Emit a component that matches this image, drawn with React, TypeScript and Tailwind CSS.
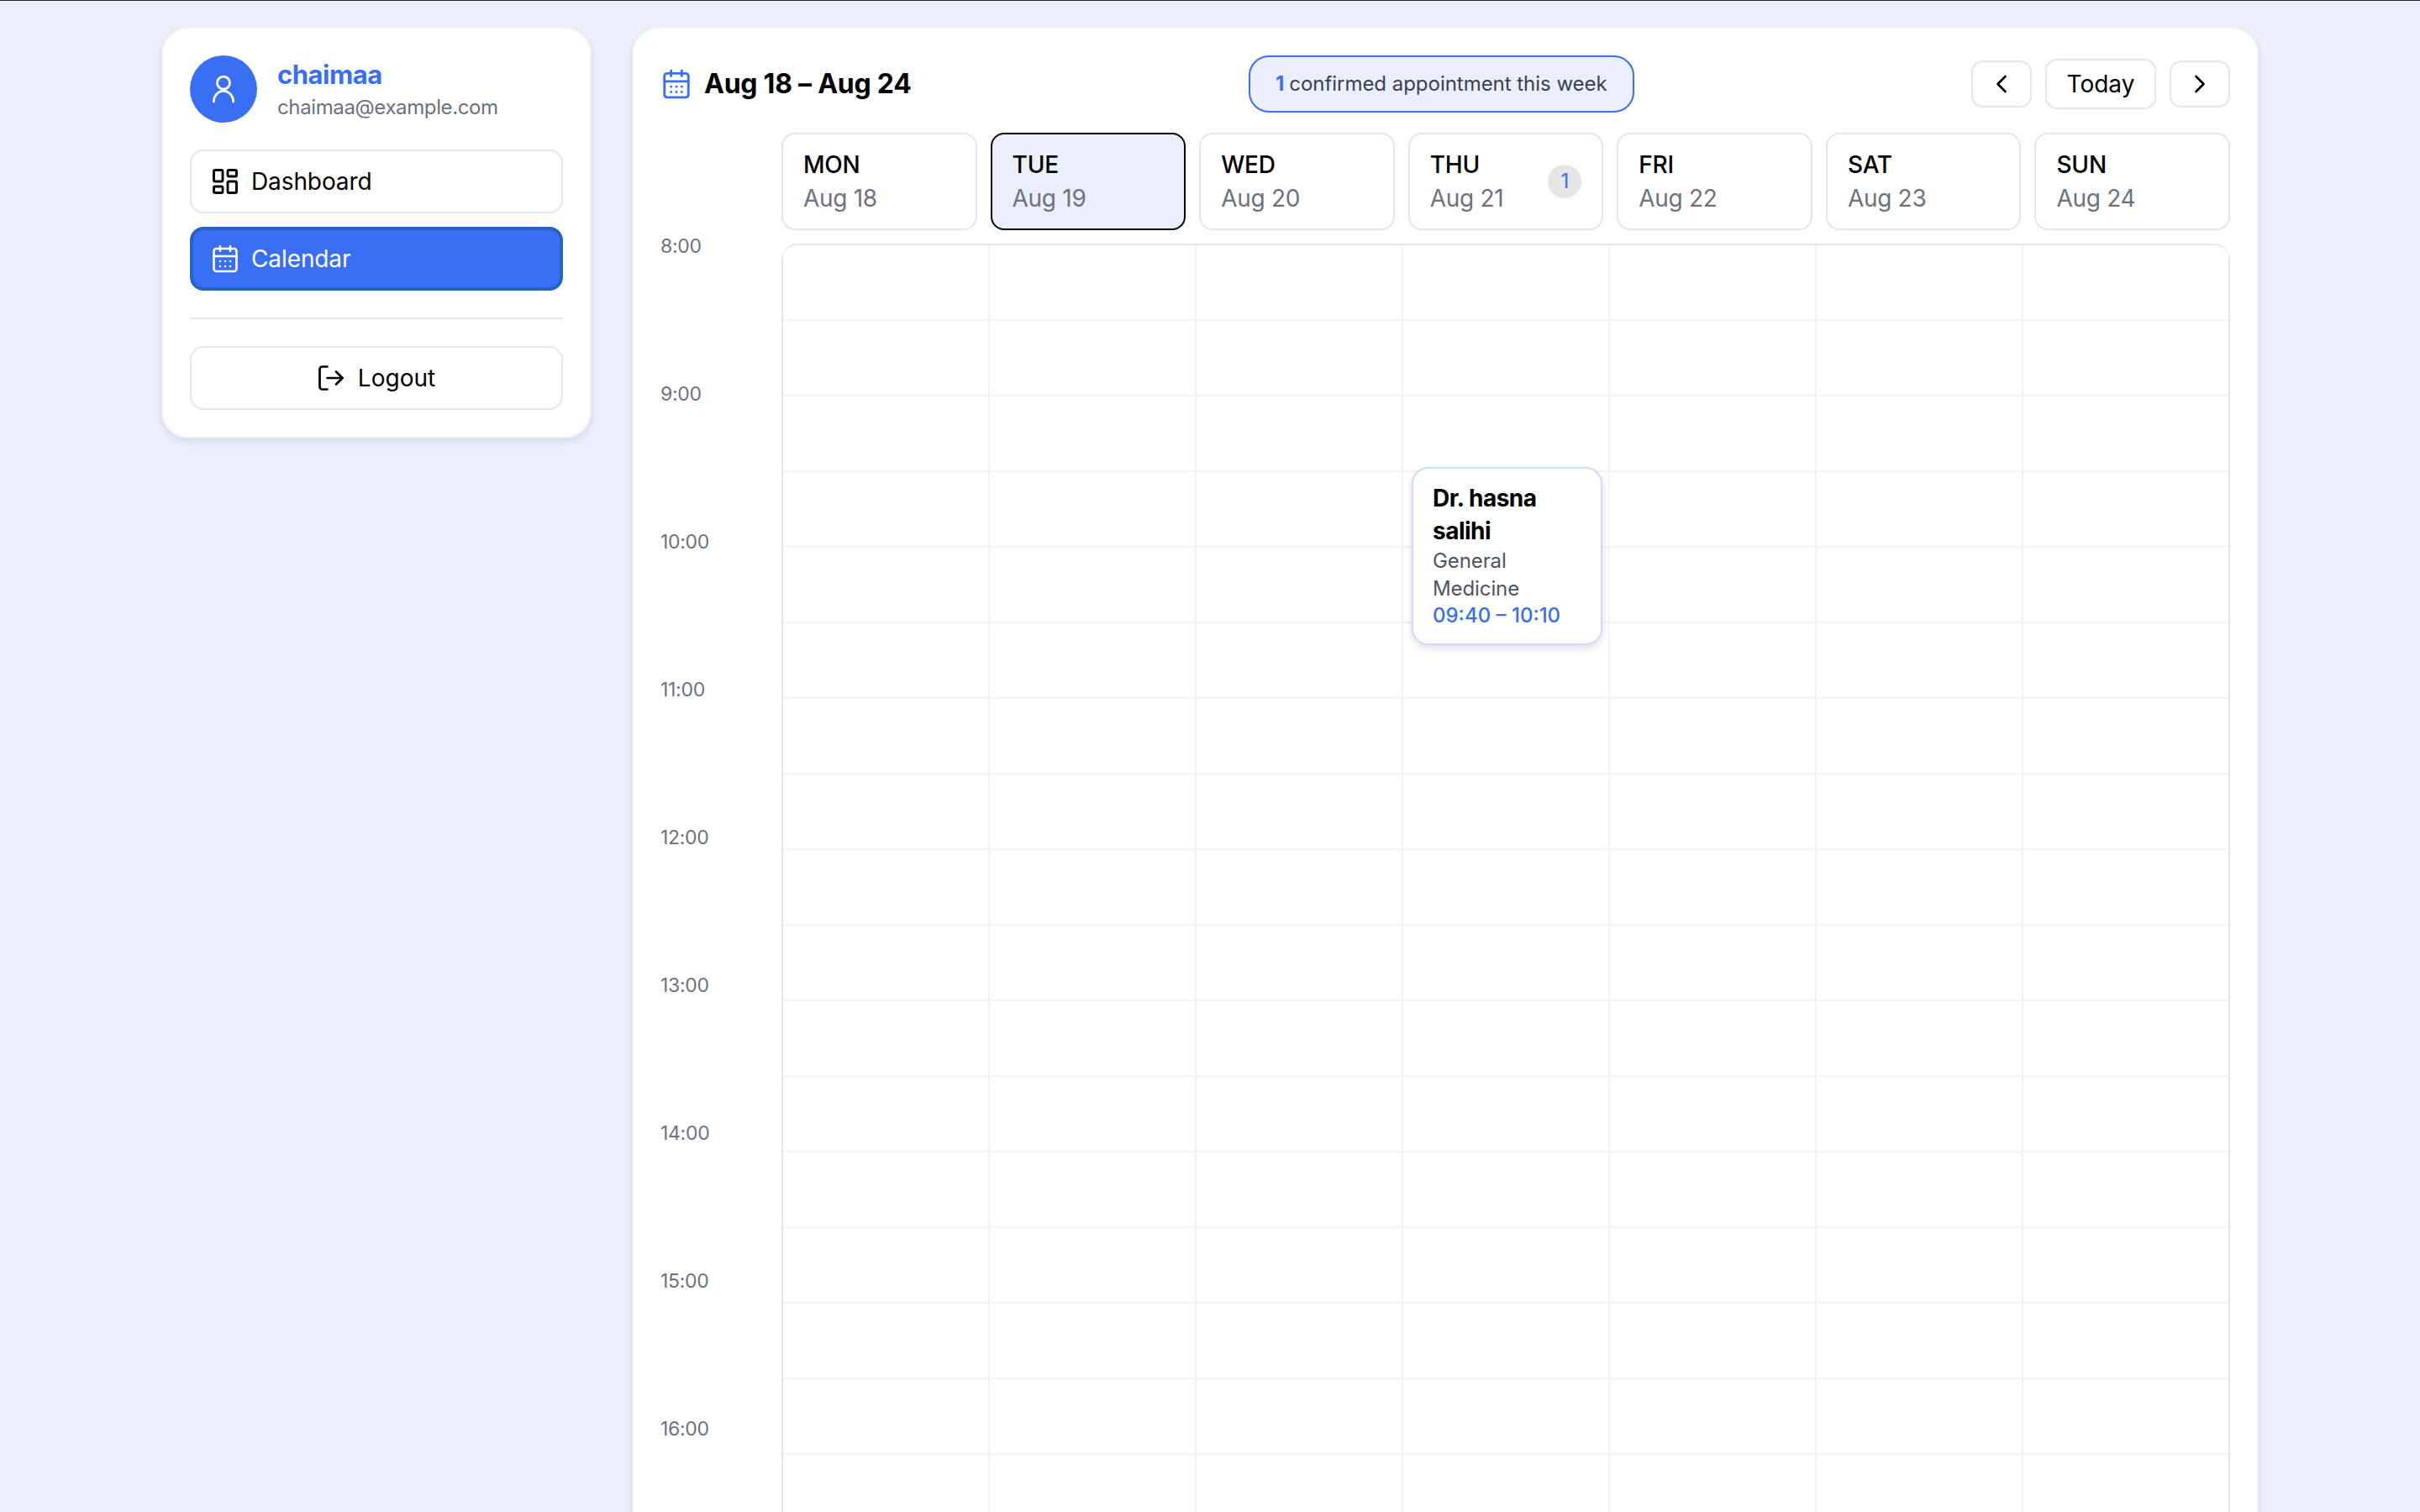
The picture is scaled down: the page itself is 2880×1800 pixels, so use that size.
import { LayoutDashboard, CalendarDays, LogOut, ChevronLeft, ChevronRight } from "lucide-react";

const days = [
  ["MON", "Aug 18"],
  ["TUE", "Aug 19"],
  ["WED", "Aug 20"],
  ["THU", "Aug 21"],
  ["FRI", "Aug 22"],
  ["SAT", "Aug 23"],
  ["SUN", "Aug 24"],
];
const hours = ["8:00", "9:00", "10:00", "11:00", "12:00", "13:00", "14:00", "15:00", "16:00"];

function UserGlyph() {
  return (
    <svg width="40" height="40" viewBox="0 0 24 24" fill="none" stroke="currentColor" strokeWidth="1.7" strokeLinecap="round">
      <circle cx="12" cy="7.6" r="4.5" />
      <path d="M5 21c0-4 3-7.6 7-7.6s7 3.6 7 7.6" />
    </svg>
  );
}

export default function App() {
  return (
    <div className="h-[1800px] w-[2880px] overflow-hidden border-t border-[#1f2430] bg-[#ebeffb] font-['Inter',sans-serif] text-black">
      <div className="flex items-start gap-[48px] pl-[192px] pt-[31px]">
        <aside className="flex w-[512px] flex-col rounded-[32px] border-2 border-[#f0f0f0] bg-white p-[32px] shadow-[0_4px_8px_rgba(30,50,100,0.1)]">
          <div className="flex h-[80px] items-center gap-[24px]">
            <div className="flex h-[80px] w-[80px] items-center justify-center rounded-full bg-[#386ff5] text-white">
              <UserGlyph />
            </div>
            <div className="flex flex-col pt-[2px]">
              <div className="text-[31px] font-bold leading-[41px] tracking-[-0.5px] text-[#386ff5]">chaimaa</div>
              <div className="text-[24px] leading-[37px] tracking-[-0.38px] text-[#6b7280]">chaimaa@example.com</div>
            </div>
          </div>
          <div className="mt-[32px] flex h-[76px] items-center gap-[13px] rounded-[16px] border-2 border-[#e6e6e6] bg-white px-[22px] text-[28px]">
            <LayoutDashboard size={36} strokeWidth={1.9} />
            <span className="tracking-[-0.1px]">Dashboard</span>
          </div>
          <div className="mt-[16px] flex h-[76px] items-center gap-[13px] rounded-[16px] border-4 border-[#2563c4] bg-[#386ff5] px-[20px] text-[28px] text-white">
            <CalendarDays size={36} strokeWidth={1.7} />
            <span className="tracking-[-0.1px]">Calendar</span>
          </div>
          <div className="my-[32px] h-[2px] bg-[#e6e6e6]" />
          <div className="flex h-[76px] items-center justify-center gap-[14px] rounded-[16px] border-2 border-[#e6e6e6] bg-white text-[28px]">
            <LogOut size={36} strokeWidth={1.8} className="-ml-[2px]" />
            <span>Logout</span>
          </div>
        </aside>

        <main className="w-[1936px] rounded-t-[32px] border-2 border-[#f0f0f0] bg-white px-[32px] pt-[32px] shadow-[0_4px_8px_rgba(30,50,100,0.1)]">
          <div className="flex h-[68px] items-center justify-between">
            <div className="flex items-center gap-[14px]">
              <CalendarDays size={38} strokeWidth={1.8} className="text-[#386ff5]" />
              <span className="text-[32px] font-bold tracking-[-0.25px]">Aug 18 – Aug 24</span>
            </div>
            <div className="flex h-[68px] items-center rounded-[24px] border-2 border-[#386ff5] bg-[#ebeffb] px-[30px] text-[24px] tracking-[-0.03px] text-[#374151]">
              <span className="mr-[6px] font-bold text-[#386ff5]">1</span> confirmed appointment this week
            </div>
            <div className="flex items-center gap-[16px]">
              <div className="flex h-[56px] w-[72px] items-center justify-center rounded-[14px] border-2 border-[#e6e6e6]"><ChevronLeft size={36} strokeWidth={1.75} /></div>
              <div className="flex h-[60px] w-[132px] items-center justify-center rounded-[14px] border-2 border-[#e6e6e6] text-[28px]">Today</div>
              <div className="flex h-[56px] w-[72px] items-center justify-center rounded-[14px] border-2 border-[#e6e6e6]"><ChevronRight size={36} strokeWidth={1.75} /></div>
            </div>
          </div>

          <div className="mt-[24px] flex">
            <div className="w-[144px] shrink-0" />
            <div className="flex flex-1 gap-[16px]">
              {days.map(([d, date], i) => (
                <div key={d} className={`relative flex h-[116px] flex-1 flex-col justify-center rounded-[16px] border-2 px-[24px] ${i === 1 ? "border-black bg-[#ebeffb]" : "border-[#e6e6e6] bg-white"}`}>
                  <div className="text-[28px] font-medium leading-[40px] tracking-[-0.2px]">{d}</div>
                  <div className="text-[28px] leading-[40px] tracking-[-0.3px] text-[#6b7280]">{date}</div>
                  {i === 3 && (
                    <div className="absolute right-[24px] top-[36px] flex h-[40px] w-[40px] items-center justify-center rounded-full bg-[#e6e6e6] text-[24px] text-[#386ff5]">1</div>
                  )}
                </div>
              ))}
            </div>
          </div>

          <div className="mt-[16px] flex">
            <div className="w-[144px] shrink-0 pt-[2px]">
              {hours.map((h) => (
                <div key={h} className="h-[176px] text-[23px] leading-[2px] tracking-[-0.3px] text-[#6b7280]">{h}</div>
              ))}
            </div>
            <div className="flex-1 overflow-hidden rounded-t-[20px] border-t-2 border-[#e6e6e6]">
              <div className="relative flex border-x-2 border-[#e6e6e6]">
                {days.map(([d], i) => (
                  <div key={d} className={`flex-1 ${i < 6 ? "border-r-2 border-[#f3f3f3]" : ""}`}>
                    {Array.from({ length: 18 }).map((_, r) => (
                      <div key={r} className="h-[90px] border-b-2 border-[#f3f3f3]" />
                    ))}
                  </div>
                ))}
                <div className="absolute left-[748px] top-[264px] w-[227px] rounded-[20px] border-2 border-[#cddcfb] bg-white py-[16px] pl-[23px] pr-[24px] shadow-[0_4px_10px_rgba(30,50,100,0.15)]">
                  <div className="text-[28px] font-bold leading-[39px] tracking-[-0.5px]">Dr. hasna salihi</div>
                  <div className="text-[24px] leading-[32.5px] tracking-[-0.1px] text-[#4b5563]">General Medicine</div>
                  <div className="text-[24px] font-medium leading-[32.5px] text-[#386ff5]">09:40 – 10:10</div>
                </div>
              </div>
            </div>
          </div>
        </main>
      </div>
    </div>
  );
}
